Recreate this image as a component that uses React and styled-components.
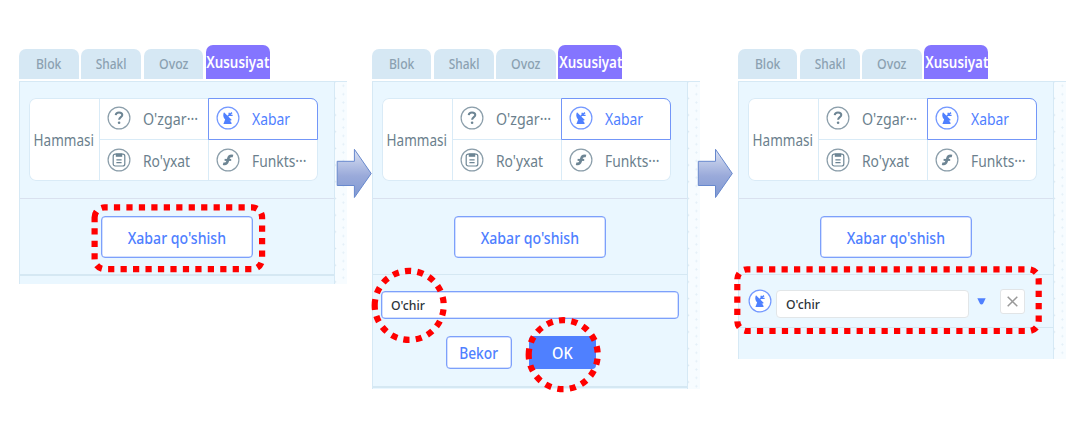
import React from "react";
import styled, { createGlobalStyle } from "styled-components";

const blue = "#4f80ff";

const GlobalStyle = createGlobalStyle`
  * { box-sizing: border-box; }
  body {
    margin: 0;
    background: #fff;
    font-family: "Noto Sans", "Noto Sans CJK KR", sans-serif;
    overflow: hidden;
  }
`;

const Page = styled.main`
  position: relative;
  width: 1086px;
  height: 422px;
  display: flex;
  align-items: flex-start;
  padding: 45px 0 0 19px;
`;

const Panel = styled.section`
  width: 328px;
  margin-right: ${(p) => p.$gap || 0}px;
  flex: none;
`;

const Tabs = styled.nav`
  display: flex;
  align-items: flex-end;
  gap: 2.5px;
  height: 34px;
`;

const Tab = styled.div`
  width: ${(p) => (p.$active ? 64 : 59.8)}px;
  height: ${(p) => (p.$active ? 34 : 30)}px;
  padding-bottom: ${(p) => (p.$active ? 0 : 1)}px;
  border-radius: 7px 7px 0 0;
  background: ${(p) => (p.$active ? "#8475ff" : "#d6e8f4")};
  color: ${(p) => (p.$active ? "#fff" : "#8ba1b1")};
  font-weight: ${(p) => (p.$active ? 600 : 500)};
  font-size: ${(p) => (p.$active ? 16 : 14)}px;
  display: flex;
  align-items: center;
  justify-content: center;
  white-space: nowrap;
`;

const Text = styled.span`
  display: inline-block;
  flex: none;
  white-space: nowrap;
  transform: scaleX(${(p) => p.$sx || 1});
  transform-origin: ${(p) => p.$origin || "center"};
`;

const Body = styled.div`
  display: flex;
  margin-top: 2px;
  height: ${(p) => p.$h}px;
`;

const Content = styled.div`
  width: 316px;
  background: #eaf7ff;
  border: 1px solid #d6e9f5;
  border-bottom: 0;
`;

const Strip = styled.div`
  width: 12px;
  border-top: 1px solid #d6e9f5;
  background-color: #f7fcff;
  background-image:
    radial-gradient(circle, #cfe0ec 0.8px, transparent 1.3px),
    radial-gradient(circle, #e3eff7 0.8px, transparent 1.3px);
  background-size: 16.7px 16.7px, 16.7px 8.35px;
  background-position: -8.5px 8px, 0px 8px;
`;

const Filter = styled.div`
  height: 117px;
  padding: 16px 0 0 9px;
  border-bottom: 1px solid #d9e1ef;
`;

const Grid = styled.div`
  width: 289px;
  height: 83px;
  display: grid;
  grid-template-columns: 71px 109px 109px;
  grid-template-rows: 42px 41px;
  background: #fff;
  border-radius: 7px;
  box-shadow: inset 0 0 0 1px #d9ebf7;
  color: #6b7f8d;
  font-size: 16px;
`;

const AllCell = styled.div`
  grid-row: span 2;
  display: flex;
  align-items: center;
  justify-content: center;
  border-right: 1px solid #d9ebf7;
`;

const Cell = styled.div`
  display: flex;
  align-items: center;
  gap: 12px;
  padding-left: 7px;
  line-height: 22px;
  border-right: ${(p) => (p.$line ? "1px solid #d9ebf7" : "0")};
  border-bottom: ${(p) => (p.$under ? "1px solid #d9ebf7" : "0")};
  ${(p) =>
    p.$active &&
    `border: 1px solid #7396f8; border-radius: 0 7px 0 0; color: ${blue};
     margin-left: -1px;`}

  > svg {
    margin-top: -2px;
  }
`;

const AddArea = styled.div`
  height: ${(p) => (p.$thick ? 77 : 76)}px;
  padding: 17px 0 0 81.3px;
  border-bottom: ${(p) => (p.$thick ? 2 : 1)}px solid #d5e8f3;
`;

const Button = styled.div`
  width: ${(p) => p.$w}px;
  height: ${(p) => p.$h}px;
  padding-top: 1px;
  display: flex;
  align-items: center;
  justify-content: center;
  border: ${(p) => (p.$primary ? "0" : "1px solid #7da0fb")};
  box-shadow: ${(p) => (p.$primary ? "none" : "inset 0 0 0 0.5px #a9c1fd")};
  border-radius: 4px;
  background: ${(p) => (p.$primary ? blue : "#fff")};
  color: ${(p) => (p.$primary ? "#fff" : blue)};
  font-size: 16px;
  font-weight: 500;
`;

const Form = styled.div`
  height: 113px;
  padding: 16px 9px 0 8px;
  border-bottom: 2px solid #d5e8f3;
`;

const Field = styled.div`
  width: ${(p) => p.$w}px;
  height: 28px;
  display: flex;
  align-items: center;
  padding: 0 0 0 9px;
  border: 1px solid ${(p) => (p.$focus ? "#7da0fb" : "#e2e6e8")};
  box-shadow: ${(p) => (p.$focus ? "inset 0 0 0 0.5px #a9c1fd" : "none")};
  border-radius: 4px;
  background: #fff;
  color: #2c3439;
  font-size: 13px;
  font-weight: 500;
`;

const Actions = styled.div`
  display: flex;
  gap: 17px;
  padding: 17px 0 0 65px;
`;

const Message = styled.div`
  height: 53px;
  display: flex;
  align-items: center;
  padding-left: 9.5px;
  border-bottom: 1px solid #d5e8f3;
`;

const FieldWrap = styled.div`
  margin: 6px 8px 0 4px;
`;

const Remove = styled.div`
  width: 25px;
  height: 25px;
  margin-left: 14px;
  display: grid;
  place-items: center;
  border: 1px solid #e2e5e7;
  border-radius: 3px;
  background: #fff;
`;

const Overlay = styled.svg`
  position: absolute;
  inset: 0;
  pointer-events: none;
`;

const IconArt = styled.svg`
  flex: none;
`;

function Icon({ kind, active }) {
  const c = active ? blue : "#6d8594";
  return (
    <IconArt width="24" height="24" viewBox="0 0 24 24" fill="none">
      <circle cx="12" cy="12" r="10.9" fill="#fff" stroke={active ? "#7398ff" : "#8b9eaa"} strokeWidth="1.2" />
      {kind === "question" && (
        <>
          <path d="M8.7 9.2c.2-1.8 1.4-2.8 3.3-2.8s3.3 1 3.3 2.6c0 2.2-3.2 2.2-3.2 4.8" stroke={c} strokeWidth="2" />
          <circle cx="12.1" cy="16.8" r="1.3" fill={c} />
        </>
      )}
      {kind === "list" && (
        <>
          <rect x="6.2" y="6.2" width="11.6" height="11.8" rx="2" stroke={c} strokeWidth="1.2" />
          <path d="M8.8 5.4h6.4v3.4H8.8z" fill={c} />
          <path d="M9.4 11.8h5.2M9.4 14.6h5.2" stroke={c} strokeWidth="1.2" />
        </>
      )}
      {kind === "signal" && (
        <>
          <path d="M8 6.2 15.8 14C13.2 15.6 10.3 15 8.5 12.8 7 10.9 6.9 8.2 8 6.2Z" fill={c} />
          <path d="M9.4 12.8 7.4 18h8.2c0-1.7-.8-2.7-2-3.2Z" fill={c} />
          <path d="M11.2 10.8 16 6.6M13.2 6.7v2.7h3.4" stroke={c} strokeWidth="1.4" />
        </>
      )}
      {kind === "function" && (
        <>
          <path d="M17 8.1c-2.7-.7-3.9.1-4.5 2.1l-.9 3.2c-.6 2.1-1.7 3-4.5 2.3" stroke={c} strokeWidth="2.6" />
          <path d="M8.6 11.9h6.6" stroke={c} strokeWidth="2" />
        </>
      )}
    </IconArt>
  );
}

function Entry({ kind, label, sx, ...rest }) {
  return (
    <Cell {...rest}>
      <Icon kind={kind} active={rest.$active} />
      <Text $sx={sx} $origin="left">{label}</Text>
    </Cell>
  );
}

function PropertyPanel({ gap, height, thick, children }) {
  return (
    <Panel $gap={gap}>
      <Tabs>
        <Tab><Text $sx={0.87}>Blok</Text></Tab>
        <Tab><Text $sx={0.85}>Shakl</Text></Tab>
        <Tab><Text $sx={0.88}>Ovoz</Text></Tab>
        <Tab $active><Text $sx={0.835}>Xususiyat</Text></Tab>
      </Tabs>
      <Body $h={height}>
        <Content>
          <Filter>
            <Grid>
              <AllCell><Text $sx={0.845}>Hammasi</Text></AllCell>
              <Entry kind="question" label="O'zgar···" sx={0.89} $line $under />
              <Entry kind="signal" label="Xabar" sx={0.87} $active />
              <Entry kind="list" label="Ro'yxat" sx={0.865} $line />
              <Entry kind="function" label="Funkts···" sx={0.865} />
            </Grid>
          </Filter>
          <AddArea $thick={thick}>
            <Button $w={152} $h={42}><Text $sx={0.88}>Xabar qo'shish</Text></Button>
          </AddArea>
          {children}
        </Content>
        <Strip />
      </Body>
    </Panel>
  );
}

const Arrow = ({ x }) => (
  <path
    d={`M${x} 161.3h17.2v-12l16.8 24.2-16.8 24v-12H${x}z`}
    fill="url(#arrowFill)"
    stroke="#6788cd"
    strokeWidth="1"
  />
);

const Dotted = ({ d }) => (
  <path d={d} fill="none" stroke="#ff0000" strokeWidth="6.2" strokeDasharray="6.23 6.23" />
);

const roundedFrame = (x, y, w, h, r = 10) =>
  `M${x} ${y + r}a${r} ${r} 0 0 1 ${r} ${-r}h${w - 2 * r}a${r} ${r} 0 0 1 ${r} ${r}v${h - 2 * r}` +
  `a${r} ${r} 0 0 1 ${-r} ${r}h${2 * r - w}a${r} ${r} 0 0 1 ${-r} ${-r}z`;

const ring = (cx, cy, r) =>
  `M${cx - r} ${cy}a${r} ${r} 0 0 1 ${2 * r} 0a${r} ${r} 0 0 1 ${-2 * r} 0z`;

export default function App() {
  return (
    <>
      <GlobalStyle />
      <Page>
        <PropertyPanel gap={24.6} height={203} thick />
        <PropertyPanel gap={38} height={308}>
          <Form>
            <Field $w={298} $focus><Text $sx={0.94} $origin="left">O'chir</Text></Field>
            <Actions>
              <Button $w={66} $h={33}><Text $sx={0.86}>Bekor</Text></Button>
              <Button $w={67} $h={33} $primary><Text $sx={0.91}>OK</Text></Button>
            </Actions>
          </Form>
        </PropertyPanel>
        <PropertyPanel height={278}>
          <Message>
            <Icon kind="signal" active />
            <FieldWrap>
              <Field $w={193}><Text $sx={0.94} $origin="left">O'chir</Text></Field>
            </FieldWrap>
            <svg width="9" height="7" viewBox="0 0 9 7">
              <path d="M.3.3h8.4L6 5.8a1.8 1.8 0 0 1-3 0z" fill={blue} />
            </svg>
            <Remove>
              <svg width="11" height="11" viewBox="0 0 11 11">
                <path d="M.7.7l9.6 9.6M10.3.7.7 10.3" stroke="#999" strokeWidth="1.5" />
              </svg>
            </Remove>
          </Message>
        </PropertyPanel>
        <Overlay width="1086" height="422" viewBox="0 0 1086 422">
          <defs>
            <linearGradient id="arrowFill" x1="0" y1="0" x2="0" y2="1">
              <stop offset="0" stopColor="#dbe2f3" />
              <stop offset="0.55" stopColor="#9aaada" />
              <stop offset="1" stopColor="#8099d2" />
            </linearGradient>
          </defs>
          <Arrow x={337.2} />
          <Arrow x={698.3} />
          <Dotted d={roundedFrame(94.6, 207.4, 167.5, 61.7)} />
          <Dotted d={ring(409.2, 305.4, 34.5)} />
          <Dotted d={ring(563.2, 354.7, 34.5)} />
          <Dotted d={roundedFrame(737.3, 269.3, 301.4, 61.7)} />
        </Overlay>
      </Page>
    </>
  );
}
